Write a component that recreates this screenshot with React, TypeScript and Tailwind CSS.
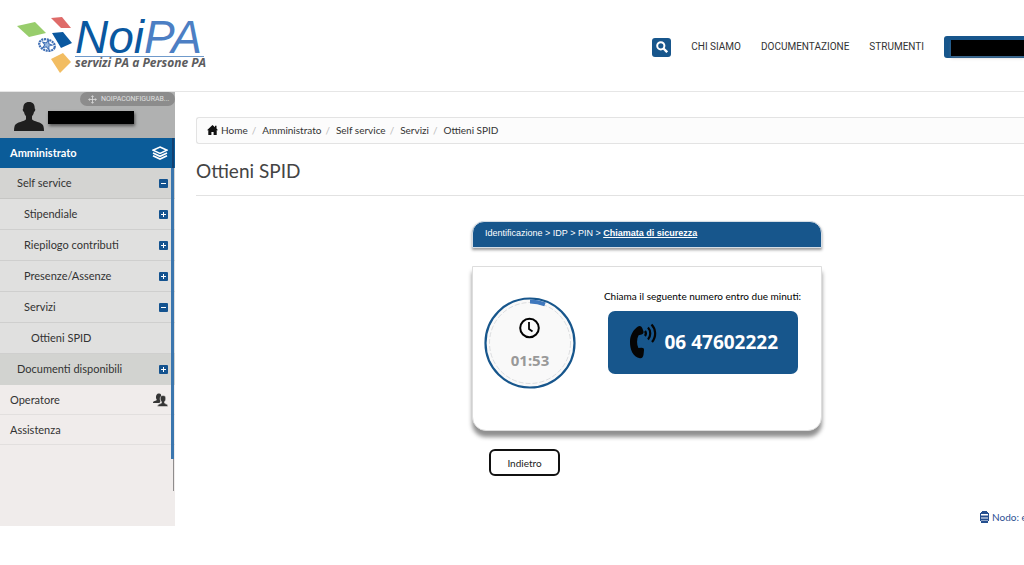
import React from "react";

function Logo() {
  return (
    <svg viewBox="0 0 210 80" className="h-20 w-[210px]" role="img" aria-label="NoiPA">
      <polygon points="17,26 35,22 46,33 29,37" fill="#98cd6c" />
      <polygon points="51,18 62,17 71,28 61,28" fill="#df6b69" />
      <polygon points="52,33 63,32 72,43 61,48" fill="#0a58a0" />
      <polygon points="51,59 63,53 71,62 60,73" fill="#f2bd62" />
      <g fill="none" stroke="#3f6fb5" transform="rotate(18 47 45)">
        <ellipse cx="47" cy="45" rx="8" ry="5.5" strokeWidth="2.2" strokeDasharray="2 .7" />
        <path d="m47 40 1.4 3.3 3.6.2-2.9 2 1.2 3.4-3.3-2-3.3 2 1.2-3.4-2.9-2 3.6-.2Z" fill="#9dbbe0" strokeWidth="1" />
      </g>
      <text x="75" y="53" fontFamily="Liberation Sans, sans-serif" fontStyle="italic" fontSize="46" fill="#0a58a0">
        Noi<tspan fill="#4c7fc4">PA</tspan>
      </text>
      <path d="M75 56.5H204" stroke="#6f9acb" />
      <text x="75" y="67" fontFamily="Open Sans, sans-serif" fontStyle="italic" fontWeight="700" fontSize="12" fill="#5c5c5e">
        servizi PA a Persone PA
      </text>
    </svg>
  );
}

function PersonIcon() {
  return (
    <svg viewBox="0 0 30 29" className="h-[29px] w-[30px] shrink-0" aria-hidden="true">
      <path d="M15 0c4 0 6 2.700 5.700 6.500 1 .3.600 3-.7 3.600-.4 2.200-1.400 3.400-2 4.200v3c1 2.200 10 2.700 11.300 6.400.5 1.700.7 3.300.7 5.300H0c0-2 .2-3.600.7-5.300C2 20 11 19.500 12 17.300v-3c-.6-.8-1.600-2-2-4.200-1.300-.6-1.700-3.300-.7-3.600C9 2.700 11 0 15 0Z" fill="#1f1f1f" />
    </svg>
  );
}

function ToggleIcon({ open }: { open: boolean }) {
  return (
    <svg viewBox="0 0 9 9" className="size-[9px]" aria-hidden="true">
      <rect width="9" height="9" rx="1" fill="#14538f" />
      <path d={open ? "M2 4.500h5" : "M2 4.500h5M4.500 2v5"} stroke="#fff" />
    </svg>
  );
}

function LayersIcon() {
  return (
    <svg viewBox="0 0 16 14" className="h-[14px] w-4" fill="none" stroke="#fff" aria-hidden="true">
      <path d="m8 1 7 3.200-7 3.300-7-3.300Z" strokeWidth="1.500" />
      <path d="m1 7 7 3.300L15 7M1 9.700 8 13l7-3.300" strokeWidth="1.700" />
    </svg>
  );
}

function PeopleIcon() {
  return (
    <svg viewBox="0 0 15 14" className="h-[14px] w-[15px]" fill="#353535" aria-hidden="true">
      <path d="M5.500.5C8 .2 8.500 2 8 3.500 6.500 4.500 6.600 7 7.500 8.300L6.500 10H0c0-2.500 3.600-1.700 3.800-3.200C2.500 5 2.600 1 5.500.5Z" />
      <path d="M10 2.500c2.300 0 3 1.700 2.700 3.700-.1 1.200-.7 2-1.200 2.600v1.300c.5 1 3.400.7 3.500 3.400H4.500c.1-2.700 3.200-2.400 4-3.400V8.800c-.5-.6-1.100-1.400-1.200-2.600-.3-2 .4-3.700 2.700-3.700Z" stroke="#f0eceb" strokeWidth=".5" />
    </svg>
  );
}

type Item = { label: string; level: 1 | 2 | 3 | 4; icon?: React.ReactNode; tone: string };

const items: Item[] = [
  { label: "Amministrato", level: 1, icon: <LayersIcon />, tone: "bg-[#0b5c99] font-bold text-white border-[#0b5c99]" },
  { label: "Self service", level: 2, icon: <ToggleIcon open />, tone: "bg-[#d4d4d2] border-[#c6c6c4]" },
  { label: "Stipendiale", level: 3, icon: <ToggleIcon open={false} />, tone: "bg-[#e0e0df] border-[#cfcfce]" },
  { label: "Riepilogo contributi", level: 3, icon: <ToggleIcon open={false} />, tone: "bg-[#e0e0df] border-[#cfcfce]" },
  { label: "Presenze/Assenze", level: 3, icon: <ToggleIcon open={false} />, tone: "bg-[#e0e0df] border-[#cfcfce]" },
  { label: "Servizi", level: 3, icon: <ToggleIcon open />, tone: "bg-[#e0e0df] border-[#cfcfce]" },
  { label: "Ottieni SPID", level: 4, tone: "bg-[#e0e0df] border-[#cfcfce]" },
  { label: "Documenti disponibili", level: 2, icon: <ToggleIcon open={false} />, tone: "bg-[#d2d3d0] border-[#d2d3d0]" },
  { label: "Operatore", level: 1, icon: <PeopleIcon />, tone: "border-[#e2dfde]" },
  { label: "Assistenza", level: 1, tone: "border-[#e2dfde]" },
];

const rowShape = {
  1: "h-[30px] pl-[10px]",
  2: "h-[31px] pl-[17px]",
  3: "h-[31px] pl-6",
  4: "h-[31px] pl-[31px]",
};

function Sidebar() {
  return (
    <aside className="flex h-[434px] w-[175px] shrink-0 flex-col bg-[#f0eceb]">
      <div className="relative flex h-[46px] items-start bg-[#b0b1b1] pt-[10px] pl-[14px]">
        <PersonIcon />
        <span className="mt-[9px] ml-1 h-[13px] w-[86px] bg-black shadow-[1px_2px_3px_#555]" />
        <span className="absolute top-0 right-0 flex h-[14px] w-[95px] items-center gap-1 rounded-full bg-[#8c8c8c] pl-2 font-['Roboto',sans-serif] text-[7px] leading-3 whitespace-nowrap text-[#e0e0e0]">
          <svg viewBox="0 0 9 9" className="size-[9px]" fill="none" stroke="#e0e0e0" strokeWidth=".8" aria-hidden="true">
            <path d="M4.500.7v7.600M.7 4.500h7.600M3.300 1.900 4.500.7l1.200 1.200M3.300 7.100l1.200 1.200 1.200-1.200M1.900 3.300.7 4.500l1.200 1.200M7.100 3.300l1.200 1.200-1.200 1.200" />
          </svg>
          NOIPACONFIGURAB...
        </span>
      </div>
      <div className="relative">
        <nav>
          <ul>
            {items.map((item) => (
              <li key={item.label}>
                <a href="#" className={`flex items-center justify-between border-b pr-[7px] ${rowShape[item.level]} ${item.tone}`}>
                  {item.label}
                  {item.icon}
                </a>
              </li>
            ))}
          </ul>
        </nav>
        <span className="absolute top-0 right-[1px] h-[353px] w-px bg-[#8e8c8c]" />
        <span className="absolute top-[30px] right-[1px] h-[291px] w-[3px] bg-[#3b76ae]" />
        <span className="absolute top-0 right-[1px] h-[30px] w-[2px] bg-[#123f70]" />
      </div>
    </aside>
  );
}

function Header() {
  return (
    <header className="flex h-[92px] items-start justify-between border-b border-[#e6e6e6]">
      <Logo />
      <div className="flex items-center pt-9">
        <button aria-label="Cerca" className="flex size-[19px] items-center justify-center rounded-[3px] bg-[#17568c]">
          <svg viewBox="0 0 12 12" className="size-3" fill="none" stroke="#fff" aria-hidden="true">
            <circle cx="4.800" cy="4.800" r="3.600" strokeWidth="2" />
            <path d="m7.500 7.500 3.700 3.700" strokeWidth="2.400" />
          </svg>
        </button>
        <nav className="ml-5 flex gap-5 font-['Roboto',sans-serif] text-[10px]">
          <a href="#">CHI SIAMO</a>
          <a href="#">DOCUMENTAZIONE</a>
          <a href="#">STRUMENTI</a>
        </nav>
        <div className="ml-5 flex h-[22px] w-20 items-center rounded-l-[3px] bg-[#17568c] pl-[7px]">
          <span className="mt-[2px] h-4 grow bg-black shadow-[0_2px_3px_#8886]" />
        </div>
      </div>
    </header>
  );
}

function Timer() {
  return (
    <div className="relative size-[92px] shrink-0">
      <svg viewBox="0 0 92 92" className="size-full" fill="none" aria-hidden="true">
        <circle cx="46" cy="46" r="44.500" fill="#f9f9f9" stroke="#17568c" strokeWidth="2.200" />
        <circle cx="46" cy="46" r="40.500" stroke="#d4d6d8" strokeWidth=".8" strokeDasharray="5 2" />
        <path d="M46 4.500a41.500 41.500 0 0 1 15 2.800" stroke="#3f78bd" strokeWidth="4" />
        <circle cx="45.500" cy="31" r="9.300" stroke="#000" strokeWidth="2" />
        <path d="M45 25v7l3.500 2.500" stroke="#000" strokeWidth="1.800" />
      </svg>
      <span className="absolute inset-x-0 top-[53px] text-center font-['Noto_Sans',sans-serif] text-[15px] leading-5 font-bold text-[#999]">
        01:53
      </span>
    </div>
  );
}

function PhoneIcon() {
  return (
    <svg viewBox="0 0 28 37" className="h-[37px] w-7" aria-hidden="true">
      <path d="M9 3.500c1.800-1.300 3.500-.2 4.200 1.600l1.200 3c.6 1.700-.2 3-1.800 3.400l-3 .7c-2 3.800-2 9-.2 12.800l3-.2c1.700-.1 2.800.7 2.600 2.400l-.5 4.500c-.3 2-1.400 4-3.600 3.600C4 34 .8 26.500 1 18.500 1.100 12 4.500 6.500 9 3.500Z" fill="#050505" />
      <path d="M16 8q1.800 2.500 0 5M19 4.500c3 3.300 3 8.700 0 12M22.500 1.500c4.500 4.500 5 12.500.5 17.500" fill="none" stroke="#050505" strokeWidth="2.200" />
    </svg>
  );
}

const crumbs = ["Home", "Amministrato", "Self service", "Servizi", "Ottieni SPID"];

function Breadcrumb() {
  return (
    <nav aria-label="Percorso" className="mt-[25px] flex h-[27px] items-center rounded-l-[3px] border border-r-0 border-[#e3e3e3] bg-[#fcfcfc] pb-[2px] pl-[10px] text-[10px]">
      <svg viewBox="0 0 11 10" className="mr-[3px] h-[10px] w-[11px]" fill="#111" aria-hidden="true">
        <path d="M5.500 0 8 2.200V.8h1.500v2.700L11 5.200H9.700V10H6.600V7H4.400v3H1.300V5.200H0Z" />
      </svg>
      <ol className="flex gap-[6px]">
        {crumbs.map((crumb, i) => (
          <li key={crumb} className="flex gap-1">
            <a href="#">{crumb}</a>
            {i < crumbs.length - 1 && <span className="text-[#bbb]">/</span>}
          </li>
        ))}
      </ol>
    </nav>
  );
}

export default function App() {
  return (
    <div className="overflow-hidden bg-white font-['Lato',sans-serif] text-[11px] leading-4 text-[#333]">
      <Header />
      <div className="flex items-start">
        <Sidebar />
        <main className="min-w-0 grow pl-[21px]">
          <Breadcrumb />
          <h1 className="border-b border-[#e2e2e2] pt-3 pb-[9px] text-[19px] leading-[30px] text-[#444]">Ottieni SPID</h1>
          <div className="mt-[25px] grid grid-cols-3">
            <section className="col-span-2 col-start-2">
              <div className="h-[27px] w-[350px] rounded-t-[12px] border border-[#d5dde5] bg-[#17568c] pl-3 font-['Liberation_Sans',sans-serif] text-[9px] leading-[22px] text-white shadow-[0_2px_3px_#999]">
                Identificazione &gt; IDP &gt; PIN &gt; <b className="underline">Chiamata di sicurezza</b>
              </div>
              <div className="mt-[18px] flex h-[165px] w-[350px] items-start rounded-b-[14px] border border-[#ddd] bg-white pr-4 pl-[11px] shadow-[0_6px_4px_#909090]">
                <div className="pt-[30px]">
                  <Timer />
                </div>
                <div className="ml-6 flex grow flex-col items-center pt-[21px]">
                  <p className="text-[10px] whitespace-nowrap text-black">Chiama il seguente numero entro due minuti:</p>
                  <a href="tel:0647602222" className="mt-[7px] flex h-[63px] w-[190px] items-center gap-2 rounded-[7px] bg-[#17568c] pb-[2px] pl-[21px] font-['Open_Sans',sans-serif] text-[19px] font-bold whitespace-nowrap text-white">
                    <PhoneIcon />
                    06 47602222
                  </a>
                </div>
              </div>
              <button className="mt-[18px] ml-[17px] h-[27px] w-[71px] rounded-[6px] border-2 border-[#111] bg-white text-[10px] text-[#222]">Indietro</button>
            </section>
          </div>
          <div className="mt-[33px] flex items-center justify-end gap-[3px] text-[10px] text-[#2b4f92]">
            <svg viewBox="0 0 9 12" className="h-3 w-[9px]" fill="none" stroke="#254f8f" aria-hidden="true">
              <path d="M1 2h7M.5 5.500h8M.5 8.500h8M1 11h7" strokeWidth="2" />
              <path d="M2 .5h5M.5 2v8M8.500 2v8" />
            </svg>
            <span className="w-8 overflow-hidden whitespace-nowrap">Nodo: e</span>
          </div>
        </main>
      </div>
    </div>
  );
}
